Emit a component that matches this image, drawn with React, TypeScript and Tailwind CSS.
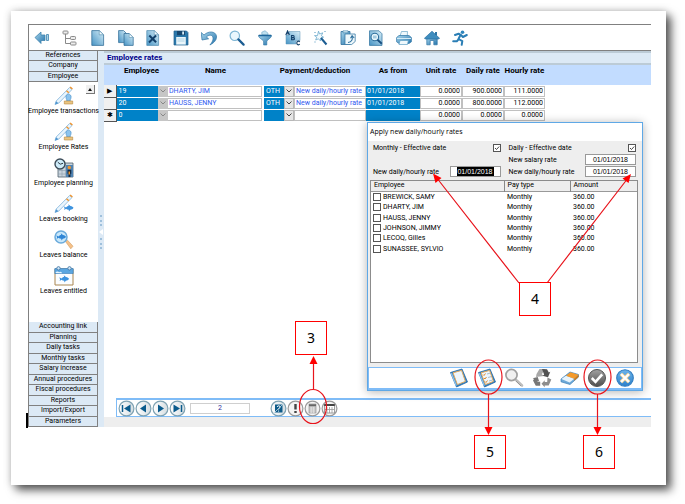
import React from "react";

const UI = "font-['Roboto','Liberation_Sans',sans-serif]";

/* ---------- toolbar icons (16 x 16) ---------- */

function Svg({ children, size = 16, className = "" }: { children: React.ReactNode; size?: number; className?: string }) {
  return (
    <svg width={size} height={size} viewBox="0 0 16 16" fill="none" aria-hidden="true" className={className}>
      {children}
    </svg>
  );
}

const page = "M1.8 .6h7.4l4.4 4.2v10.6H1.8z";

const toolbar: { label: string; icon: React.ReactNode }[] = [
  {
    label: "Back",
    icon: (
      <Svg>
        <path d="M1 7.500 7 2v3h4v5.500H7v3z" fill="url(#steel)" stroke="#3d83ad" strokeWidth=".8" />
        <path d="M12.500 4.500h2v6h-2z" fill="#a9d6ec" stroke="#3f83ad" strokeWidth=".8" />
      </Svg>
    ),
  },
  {
    label: "Tree view",
    icon: (
      <Svg>
        <g stroke="#8a8a8a" strokeWidth="1" fill="#ececec">
          <path d="M3.500 4v9.500h5M3.500 8.500h5" fill="none" />
          <rect x="1" y="1" width="5" height="3" rx=".8" />
          <rect x="8.500" y="6.500" width="5" height="3" rx=".8" />
          <rect x="8.500" y="12" width="5.500" height="3" rx=".8" />
        </g>
      </Svg>
    ),
  },
  {
    label: "New",
    icon: (
      <Svg>
        <path d={page} fill="url(#doc)" stroke="#39729b" strokeWidth=".8" />
        <path d="M9.200 .6v4.200h4.400z" fill="#f2fafd" stroke="#5b93b5" strokeWidth=".7" />
      </Svg>
    ),
  },
  {
    label: "Copy",
    icon: (
      <Svg>
        <path d="M.6 .6h5l3 3v9H.6z" fill="url(#doc)" stroke="#39729b" strokeWidth=".8" />
        <path d="M6 3.500h5.200l4 4v7.900H6z" fill="url(#doc)" stroke="#39729b" strokeWidth=".8" />
        <path d="M11.200 3.500v4h4z" fill="#f2fafd" stroke="#5b93b5" strokeWidth=".6" />
      </Svg>
    ),
  },
  {
    label: "Delete",
    icon: (
      <Svg>
        <path d={page} fill="url(#doc)" stroke="#5b93b5" strokeWidth=".8" />
        <path d="M9.200 .6v4.200h4.400z" fill="#f2fafd" stroke="#5b93b5" strokeWidth=".7" />
        <path d="m4.300 5.500 6.800 6.800M11 5.500l-7 7" stroke="#123f69" strokeWidth="2" />
      </Svg>
    ),
  },
  {
    label: "Save",
    icon: (
      <Svg>
        <path d="M1 1h12.500L15 2.500V15H1z" fill="#2b78ab" stroke="#1f5f8d" strokeWidth=".7" />
        <path d="M4 1h8v4.200H4z" fill="#17466e" />
        <path d="M9.200 1.600h1.800v2.900H9.200z" fill="#d8eef8" />
        <path d="M3.200 7h9.600v7.600H3.200z" fill="#eaf6fb" />
        <path d="M4.500 9h7M4.500 11h7" stroke="#9cc7dc" strokeWidth=".7" />
      </Svg>
    ),
  },
  {
    label: "Undo",
    icon: (
      <Svg>
        <path
          d="M.2 2.500 1 10l6.600-1.200L5.400 7C7.500 4.800 10.600 4.600 11.600 6.600c1 2.200.2 5-2.700 8.400 4.800-2.400 7.200-5.800 6.500-9.200C14.500 1.200 7.500.6 3 5z"
          fill="url(#steel)"
          stroke="#2f76a6"
          strokeWidth=".7"
        />
      </Svg>
    ),
  },
  {
    label: "Find",
    icon: (
      <Svg>
        <circle cx="5.800" cy="5.800" r="4.700" fill="#eaf7fd" stroke="#7db5d4" strokeWidth="1.200" />
        <path d="m9.400 9.400 5.200 5.200" stroke="#1c5d92" strokeWidth="2.200" strokeLinecap="round" />
      </Svg>
    ),
  },
  {
    label: "Filter",
    icon: (
      <Svg>
        <path d="M4.800 4.500V2.200L8 .7l3 2.500v1.800z" fill="#bfe0ef" stroke="#6ca6c6" strokeWidth=".6" />
        <path d="M1.800 5h12.400v2l-4.400 4v4H6.600v-4L1.800 7z" fill="url(#steel)" stroke="#2f76a6" strokeWidth=".6" />
        <path d="M1.600 5.600h12.800" stroke="#1f679c" strokeWidth="1.300" />
      </Svg>
    ),
  },
  {
    label: "Sort",
    icon: (
      <Svg>
        <path d="M1 5h3V1.500h11v9h-4V14H1z" fill="url(#doc)" stroke="#5b93b5" strokeWidth=".5" />
        <g stroke="#123f69" strokeWidth="1.100">
          <path d="M.8 5 2.600.9 4.400 5M1.400 3.700h2.400" />
          <path d="M6.600 5.500v4.200h1.800c1.400 0 1.400-2 0-2.100H6.600h1.600c1.200 0 1.200-2.100 0-2.100z" />
          <path d="M14.800 11.800c-1.200-1.200-3-.6-3 1.200s1.800 2.400 3 1.200" />
        </g>
      </Svg>
    ),
  },
  {
    label: "Wizard",
    icon: (
      <Svg>
        <path d="M5.500 1.200 6.600 4l3.200-1.200L8.400 5.700l2.200 1.500-2.800.8-.3 3-2-2.200-2.800 1.200 1-2.800L1.500 5.600h3z" fill="#f3fafd" stroke="#6ba9cc" strokeWidth=".8" />
        <path d="m8 8 5.500 6.500" stroke="#1c5d92" strokeWidth="2" />
        <path d="M1.500 2.500h1M11.500 1.500h1M1.500 12h1" stroke="#4b93bd" />
      </Svg>
    ),
  },
  {
    label: "Paste",
    icon: (
      <Svg>
        <path d="M1 1.500h9v13H1z" fill="url(#steel)" stroke="#2d6f9d" strokeWidth=".8" />
        <path d="M3 .8h5v2H3z" fill="#d4ebf5" stroke="#3c7ca6" strokeWidth=".6" />
        <path d="M5 4h10.200v7.500l-3.500 3H5z" fill="#eef8fc" stroke="#3c7ca6" strokeWidth=".8" />
        <path d="M8 12.500c3.600-.2 4.800-3 4.100-6M10.500 8.200l1.600-2.500L14.200 8" stroke="#2d6f9d" strokeWidth="1.100" />
      </Svg>
    ),
  },
  {
    label: "Preview",
    icon: (
      <Svg>
        <path d="M1.500 .8h9.500l3 3v11.600H1.500z" fill="url(#doc)" stroke="#3c7ca6" strokeWidth=".8" />
        <circle cx="6.800" cy="7" r="3.800" fill="#e8f6fc" stroke="#2d6f9d" strokeWidth="1.100" />
        <path d="M5 6.200h3.600M5 7.800h3.600" stroke="#5f9fc4" strokeWidth=".7" />
        <path d="m9.500 9.800 4.300 4" stroke="#184f80" strokeWidth="1.900" />
      </Svg>
    ),
  },
  {
    label: "Print",
    icon: (
      <Svg>
        <path d="M4 6 5.500 1.500h6L11.300 6z" fill="#eef8fc" stroke="#6ca6c6" strokeWidth=".7" />
        <path d="M.6 7.500 3 5.500h10l2.400 2v4.300L13 13.500H3L.6 11.800z" fill="url(#steel)" stroke="#2f76a6" strokeWidth=".7" />
        <path d="M1 8.500h14" stroke="#d5ecf6" strokeWidth="1" />
        <path d="m4 10.500-1 4h8.500l.8-4z" fill="#eef8fc" stroke="#5f9fc4" strokeWidth=".7" />
      </Svg>
    ),
  },
  {
    label: "Home",
    icon: (
      <Svg>
        <path d="M2.800 7.500h10.400v7.300H9.800v-4.300H6.200v4.300H2.800z" fill="url(#steel)" stroke="#2f76a6" strokeWidth=".7" />
        <path d="M11 2h2v3.500h-2z" fill="#2f76a6" />
        <path d="M.4 8.300 8 1.200l7.600 7.100-1.200.7H1.600z" fill="#3f8dbe" stroke="#1f679c" strokeWidth=".6" />
      </Svg>
    ),
  },
  {
    label: "Exit",
    icon: (
      <Svg>
        <circle cx="10.500" cy="2.300" r="1.800" fill="#2f86bd" />
        <path
          d="M3 5 6.600 3.700l2.600 1.400 1.700 1.900 3.900-2M8.300 5.300 6.500 9l3.800 2.200-.6 3.600M6.800 9l-2 2.300H1.200"
          stroke="#2a7eb5"
          strokeWidth="2"
          strokeLinecap="round"
          strokeLinejoin="round"
        />
      </Svg>
    ),
  },
];

/* ---------- side panel icons (20 x 20) ---------- */

function Side({ children }: { children: React.ReactNode }) {
  return (
    <svg width="20" height="20" viewBox="0 0 20 20" fill="none" aria-hidden="true">
      {children}
    </svg>
  );
}

const pen = (
  <>
    <path d="M1 18.500 2.200 15 15.600 1.500 18 3.500 4.800 17z" fill="#e9f5fd" stroke="#7fb2db" strokeWidth=".8" />
    <path d="m15.600 1.500 1-1 2.300 2-1 1zM12 5.200l1-1 2.300 2-1 1z" fill="#f0952f" />
    <path d="m1 18.500 3.500-1.300-2.400-2z" fill="#4d94cf" />
  </>
);
const stamp = (
  <>
    <path d="M12 11.500a2.600 2.600 0 1 1 5 0c0 1.500-1 1.500-.8 3.500h-3.400c.2-2-.8-2-.8-3.500z" fill="#8cc4ee" stroke="#4e93cc" strokeWidth=".7" />
    <path d="M10.300 15h8.400v3h-8.400z" fill="#e9c583" stroke="#b88a3e" strokeWidth=".6" />
  </>
);
const fish = "M1 3 4 4.800C5.500 2.800 6.500 2.600 7.500 2.600L7 .3l3 2.400c2 .2 3.500 1.300 4 2.400C13 7 11.500 7.600 9.800 7.700L8 10l-.4-2.300C6 7.400 5 6.900 4 6.200L1.500 8l.6-2.400z";

const sideItems: { label: string; icon: React.ReactNode }[] = [
  { label: "Employee transactions", icon: <Side>{pen}{stamp}</Side> },
  { label: "Employee Rates", icon: <Side>{pen}{stamp}</Side> },
  {
    label: "Employee planning",
    icon: (
      <Side>
        <path d="M4 5h15v14H4z" fill="#c9d4dd" stroke="#4e5f6c" strokeWidth=".8" />
        <path d="M4 9h15M4 12.500h15M4 16h15M8 5v14M11.500 5v14" stroke="#8b9cab" strokeWidth=".6" />
        <path d="M12 7h7v12h-7z" fill="#4f83b3" />
        <circle cx="15.300" cy="9.500" r="1.700" fill="#f0952f" />
        <path d="M13.500 11.800h3.800v4h-.8V19h-2v-3.200h-1z" fill="#152c44" />
        <path d="M14.500 13.500h1.500v3h-1.500z" fill="#f0952f" />
        <circle cx="6" cy="6" r="5" fill="#cdebf9" stroke="#3b4b58" strokeWidth="1.400" />
        <path d="m3.800 4.200 2.400 2L9 5.300" stroke="#2c3a45" strokeWidth="1" />
      </Side>
    ),
  },
  { label: "Leaves booking", icon: <Side>{pen}<path d={fish} transform="translate(9 10) scale(.75)" fill="#3d93df" /></Side> },
  {
    label: "Leaves balance",
    icon: (
      <Side>
        <path d="m11.500 11.500 2-1.300 5.500 6-2.200 2.600z" fill="#f6c189" stroke="#d09a5c" strokeWidth=".6" />
        <circle cx="7" cy="7" r="6" fill="#c9e8fb" stroke="#6aaadb" strokeWidth="1.500" />
        <path d={fish} transform="translate(1.500 3) scale(.75)" fill="#2f86d6" />
      </Side>
    ),
  },
  {
    label: "Leaves entitled",
    icon: (
      <Side>
        <path d="M1 3h18v16H1z" fill="#fbfdff" stroke="#a98650" strokeWidth="1" />
        <path d="M.8 2.500h18.400v5H.8z" fill="#5ba6e0" stroke="#3578b3" strokeWidth=".6" />
        <path d="M1.500 7c1-2.200 3-1.500 3.600-.7C6.500 5 8 6 8 7.300" fill="#e6f4fd" />
        <circle cx="4.500" cy="2.300" r="1.700" fill="#cfe6f7" stroke="#3a6f9e" strokeWidth=".8" />
        <circle cx="15.500" cy="2.300" r="1.700" fill="#cfe6f7" stroke="#3a6f9e" strokeWidth=".8" />
        <path d={fish} transform="translate(4.500 9) scale(.75)" fill="#3d93df" />
      </Side>
    ),
  },
];

/* ---------- dialog icons (20 x 20) ---------- */

function Big({ children }: { children: React.ReactNode }) {
  return (
    <svg width="20" height="20" viewBox="0 0 20 20" fill="none" aria-hidden="true">
      {children}
    </svg>
  );
}

const notebook = (
  <>
    <path d="m1.500 4.500 11.500-3.500 5.500 13-11 5z" fill="#2f7fc4" stroke="#2569a6" strokeWidth=".8" />
    <path d="m4 4.800 8.600-2.400 3.800 11-8 3.200z" fill="#eef6fc" stroke="#e6aa5c" strokeWidth="1" />
    <path d="m2.300 5.200 5 12.600" stroke="#8dc2ec" strokeWidth="1.300" />
  </>
);

const dialogTools: { label: string; icon: React.ReactNode }[] = [
  { label: "Deselect all", icon: <Big>{notebook}</Big> },
  {
    label: "Select all",
    icon: (
      <Big>
        {notebook}
        <path d="m6 6.500 1 1 1.500-2M7 10l1 1 1.500-2M8 13.500l1 1 1.500-2" stroke="#e08a2c" strokeWidth="1" />
        <path d="m10 6 3-.8M11 9.500l3-.8M12 13l3-.8" stroke="#9db5c8" strokeWidth=".9" />
      </Big>
    ),
  },
  {
    label: "Search",
    icon: (
      <Big>
        <path d="m11 11 7 6.500" stroke="#bdbdbd" strokeWidth="2.600" strokeLinecap="round" />
        <path d="m12 13 5 5" stroke="#8d8d8d" strokeWidth=".8" />
        <circle cx="7.500" cy="7" r="5.600" fill="#f0f0f0" stroke="#a0a0a0" strokeWidth="1.700" />
      </Big>
    ),
  },
  {
    label: "Refresh",
    icon: (
      <Big>
        <path d="M4.500 6 7.500 1h5.500L9.800 6.200 12 8 4 9z" fill="#a8a8a8" />
        <path d="m10 1 5 .2 1.800 3.200 1.500-.6-2.300 5.500-5.500-1.600 1.700-.9z" fill="#525252" />
        <path d="m15.500 9.500 3.800 2-2.600 6h-4v1.800L9.500 15.800l3.200-3.600v1.900h2.500z" fill="#8d8d8d" />
        <path d="M8.200 13.800v4H3.800L1 12.600l1-1.600-1.300-.8 5-1.200 1.500 4.500-1.400-.7-.3 1z" fill="#777" />
      </Big>
    ),
  },
  {
    label: "Clear",
    icon: (
      <Big>
        <path d="m1 11 9-7 8.500 2.500V9L10 16.500 1 13.800z" fill="#6ea9d8" stroke="#3c7fb8" strokeWidth=".7" />
        <path d="m1.500 11 4.500-3.300 8.200 3-4.600 3.700z" fill="#e8f4fc" />
        <path d="m6 7.700 4.500-3.500 8 2.500-4.300 4z" fill="#f59a2a" />
        <path d="m14.200 10.700 4.300-4V9l-4.300 3.800z" fill="#d57a12" />
      </Big>
    ),
  },
  {
    label: "Validate",
    icon: (
      <Big>
        <circle cx="10" cy="10" r="8.500" fill="url(#dark)" stroke="#555" strokeWidth="1" />
        <path d="m4.800 10 3.700 3.800 6.700-7.500" stroke="#fff" strokeWidth="2.600" />
      </Big>
    ),
  },
  {
    label: "Cancel",
    icon: (
      <Big>
        <circle cx="10" cy="10" r="8.300" fill="url(#sky)" stroke="#2f7cc0" strokeWidth="1.100" />
        <path d="m6 6 8 8M14 6l-8 8" stroke="#f0cf90" strokeWidth="3.800" />
        <path d="m6 6 8 8M14 6l-8 8" stroke="#fff" strokeWidth="2" />
      </Big>
    ),
  },
];

/* ---------- record navigator ---------- */

function Round({ label, grey = false, children }: { label: string; grey?: boolean; children: React.ReactNode }) {
  return (
    <button type="button" aria-label={label} className="block size-[17px]">
      <svg width="17" height="17" viewBox="0 0 17 17" fill="none" aria-hidden="true">
        <circle cx="8.500" cy="8.500" r="7.400" fill={grey ? "#f4f4f4" : "url(#pearl)"} stroke={grey ? "#9a9a9a" : "#7fa3b3"} strokeWidth="1.200" />
        {children}
      </svg>
    </button>
  );
}

function Gradients() {
  const stops = (a: string, b: string) => (
    <>
      <stop offset="0" stopColor={a} />
      <stop offset="1" stopColor={b} />
    </>
  );
  return (
    <svg width="0" height="0" className="absolute" aria-hidden="true">
      <defs>
        <linearGradient id="steel" x1="0" y1="0" x2="1" y2="1">{stops("#a9d6ec", "#2373ab")}</linearGradient>
        <linearGradient id="doc" x1="0" y1="1" x2="1" y2="0">{stops("#4593c4", "#d9eff8")}</linearGradient>
        <linearGradient id="dark" x1="0" y1="0" x2="0" y2="1">{stops("#a2a2a2", "#4d4d4d")}</linearGradient>
        <linearGradient id="sky" x1="0" y1="0" x2="0" y2="1">{stops("#6db4ea", "#2c80cb")}</linearGradient>
        <linearGradient id="pearl" x1="0" y1="0" x2="1" y2="0">{stops("#ffffff", "#d5dde1")}</linearGradient>
      </defs>
    </svg>
  );
}

/* ---------- parts ---------- */

const topTabs = ["References", "Company", "Employee"];
const bottomTabs = [
  "Accounting link", "Planning", "Daily tasks", "Monthly tasks", "Salary increase",
  "Annual procedures", "Fiscal procedures", "Reports", "Import/Export", "Parameters",
];

function Tabs({ items, className }: { items: string[]; className: string }) {
  return (
    <div className={`flex flex-col ${className}`}>
      {items.map((t) => (
        <button
          key={t}
          type="button"
          className="min-h-0 flex-1 overflow-hidden border-r border-b border-[#808080] bg-[#dce9f5] text-center text-[7px] leading-[9px] whitespace-nowrap text-black"
        >
          {t}
        </button>
      ))}
    </div>
  );
}

function Sidebar() {
  return (
    <nav className="relative flex w-[69px] shrink-0 flex-col">
      <Tabs items={topTabs} className="h-[31px]" />
      <button type="button" aria-label="Scroll up" className="absolute top-[34px] right-[3px] flex size-[9px] items-center justify-center border-r border-b border-[#777] bg-[#f0f0f0]">
        <svg width="4" height="3" viewBox="0 0 4 3" aria-hidden="true"><path d="M0 3 2 0l2 3z" fill="#111" /></svg>
      </button>
      <div className="flex grow flex-col gap-[6px] pt-[4px]">
        {sideItems.map((s) => (
          <button key={s.label} type="button" className="flex flex-col items-center text-[7px] leading-[10px] whitespace-nowrap text-black">
            {s.icon}
            <span>{s.label}</span>
          </button>
        ))}
      </div>
      <Tabs items={bottomTabs} className="h-[105px]" />
    </nav>
  );
}

function Splitter() {
  return (
    <div className="flex w-[6px] shrink-0 flex-col items-center justify-center gap-[3px] bg-[#dce9f5] pb-[14px]">
      <span className="h-[11px] w-0 border-l-2 border-dotted border-[#9fc0dc]" />
      <svg width="4" height="6" viewBox="0 0 4 6" aria-hidden="true"><path d="M4 0v6L0 3z" fill="#fff" /></svg>
      <span className="h-[11px] w-0 border-l-2 border-dotted border-[#9fc0dc]" />
    </div>
  );
}

function Combo({ value, label, grey = false, width }: { value: string; label: string; grey?: boolean; width: string }) {
  return (
    <span className={`relative block shrink-0 ${width}`}>
      <select aria-label={label} defaultValue={value} className="block h-[11px] w-full appearance-none bg-[#0082c8] pl-[2px] text-[7px] leading-[11px] text-white">
        <option>{value}</option>
      </select>
      <span className={`pointer-events-none absolute inset-y-0 right-0 flex w-[10px] items-center justify-center border ${grey ? "border-[#c6c6c6] bg-[#c6c6c6] text-[#888]" : "border-[#b8b8b8] bg-[#e6e6e6] text-[#444]"}`}>
        <svg width="6" height="4" viewBox="0 0 6 4" fill="none" aria-hidden="true"><path d="m.5.5 2.500 2.500L5.500.5" stroke="currentColor" /></svg>
      </span>
    </span>
  );
}

const cell = "block h-[11px] w-full min-w-0 border border-[#c0c0c0] bg-white px-px text-[7px] leading-[9px]";

const rows = [
  { mark: "▶", id: "19", name: "DHARTY, JIM", code: "OTH", pay: "New daily/hourly rate", from: "01/01/2018", rates: ["0.0000", "900.0000", "111.0000"] },
  { mark: "", id: "20", name: "HAUSS, JENNY", code: "OTH", pay: "New daily/hourly rate", from: "01/01/2018", rates: ["0.0000", "800.0000", "112.0000"] },
  { mark: "✱", id: "0", name: "", code: "", pay: "", from: "", rates: ["0.0000", "0.0000", "0.0000"] },
];
const rateNames = ["Unit rate", "Daily rate", "Hourly rate"];

function RatesGrid() {
  return (
    <div className="bg-linear-to-b from-[#c2dcff] from-[20px] to-transparent to-[20px]">
      <table className="w-[441px] table-fixed border-collapse">
        <colgroup>
          <col className="w-[12px]" />
          <col className="w-[51px]" />
          <col className="w-[97px]" />
          <col className="w-[102px]" />
          <col className="w-[54px]" />
          <col className="w-[42px]" />
          <col className="w-[42px]" />
          <col className="w-[41px]" />
        </colgroup>
        <thead>
          <tr className="h-[20px] align-top text-[8px] leading-[11px] font-bold whitespace-nowrap text-black">
            <td />
            {["Employee", "Name", "Payment/deduction", "As from", ...rateNames].map((h) => (
              <th key={h} scope="col" className="p-0 text-center">{h}</th>
            ))}
          </tr>
        </thead>
        <tbody>
          {rows.map((r) => (
            <tr key={r.id} className="h-[12px]">
              <td className="border-r border-b border-[#555] bg-[#f0f0f0] p-0 text-center text-[7px] leading-[10px] text-black">{r.mark}</td>
              <td className="p-0"><Combo value={r.id} label="Employee" grey width="w-[51px]" /></td>
              <td className="p-0 pr-[2px]"><input aria-label="Name" defaultValue={r.name} className={`${cell} text-[#3058f0]`} /></td>
              <td className="p-0">
                <div className="flex">
                  <Combo value={r.code} label="Payment code" width="w-[30px]" />
                  <input aria-label="Payment" defaultValue={r.pay} className={`${cell} text-[#3058f0]`} />
                </div>
              </td>
              <td className="p-0"><input aria-label="As from" defaultValue={r.from} className="block h-[11px] w-full bg-[#0082c8] px-px text-[7px] leading-[11px] text-white" /></td>
              {r.rates.map((v, i) => (
                <td key={i} className="p-0"><input aria-label={rateNames[i]} defaultValue={v} className={`${cell} text-right text-black`} /></td>
              ))}
            </tr>
          ))}
        </tbody>
      </table>
    </div>
  );
}

function Navigator() {
  return (
    <div className="bg-[#eeeeee] pb-[10px]">
      <div className="bg-white pl-[12px]">
        <div className="flex h-[19px] items-center border-t-2 border-b border-l border-[#7fbcf7] pl-px">
          <Round label="First record"><path d="M4.500 5v7" stroke="#0a5b8c" strokeWidth="1.500" /><path d="M12.500 4.500v8L6 8.500z" fill="#0a5b8c" /></Round>
          <Round label="Previous record"><path d="M11 4.500v8l-6-4z" fill="#0a5b8c" /></Round>
          <Round label="Next record"><path d="M6 4.500v8l6-4z" fill="#0a5b8c" /></Round>
          <Round label="Last record"><path d="M12.500 5v7" stroke="#0a5b8c" strokeWidth="1.500" /><path d="M4.500 4.500v8l6.500-4z" fill="#0a5b8c" /></Round>
          <input aria-label="Record number" defaultValue="2" className="mr-[20px] ml-[4px] h-[11px] w-[60px] border border-[#cfcfcf] bg-white text-center text-[7px] leading-[9px] text-[#3333a0]" />
          <Round label="Help">
            <path d="M5 4.500h7.500v8H5z" fill="#0f5c8a" /><path d="M7.200 7c0-1.600 3-1.600 3 0 0 1.200-1.600 1-1.600 2.400M8.600 10.600v1" stroke="#fff" /><path d="M3.500 13.500 13.500 3.500" stroke="#c3d9e4" strokeWidth=".8" />
          </Round>
          <Round label="Alerts" grey><path d="M8.500 4v5.500M8.500 11v2" stroke="#444" strokeWidth="2.400" /></Round>
          <Round label="Apply new rates" grey>
            <path d="M5 4h7v9H5z" fill="#b5b5b5" stroke="#888" strokeWidth=".6" /><path d="M5 5.200h7" stroke="#666" strokeWidth="1.600" /><path d="M5.500 8h6M5.500 10h6M5.500 12h6" stroke="#eee" strokeWidth=".7" /><path d="M7.200 7v6M9.700 7v6" stroke="#eee" strokeWidth=".7" />
          </Round>
          <Round label="Calendar" grey>
            <path d="M3.500 5h10v8h-10z" fill="#fff" stroke="#888" strokeWidth=".8" /><path d="M3.200 5h10.600" stroke="#444" strokeWidth="2" /><path d="M6 7v6M8.500 7v6M11 7v6M3.500 9.500h10" stroke="#999" strokeWidth=".8" />
          </Round>
        </div>
      </div>
    </div>
  );
}

const people = ["BREWICK, SAMY", "DHARTY, JIM", "HAUSS, JENNY", "JOHNSON, JIMMY", "LECOQ, Gilles", "SUNASSEE, SYLVIO"];

const dateBox = "flex h-[11px] w-[51px] items-center justify-center border border-[#999] bg-white";
const tick = "block size-[8px] appearance-none border border-[#555] bg-white";

function Tick({ id, label }: { id: string; label: string }) {
  return (
    <div className="flex items-center justify-between">
      <label htmlFor={id}>{label}</label>
      <span className="relative block">
        <input id={id} type="checkbox" defaultChecked className={tick} />
        <svg width="8" height="8" viewBox="0 0 8 8" fill="none" className="pointer-events-none absolute inset-0" aria-hidden="true"><path d="m2 4 1.500 1.500L6.200 2.500" stroke="#333" strokeWidth=".9" /></svg>
      </span>
    </div>
  );
}

function DateRow({ id, label, selected = false }: { id: string; label: string; selected?: boolean }) {
  return (
    <div className="flex items-center justify-between">
      <label htmlFor={id}>{label}</label>
      <span className={dateBox}>
        <input
          id={id}
          defaultValue="01/01/2018"
          className={`h-[9px] w-[37px] text-center font-['Liberation_Sans',sans-serif] text-[7px] leading-[9px] ${selected ? "bg-black text-white" : "text-black"}`}
        />
      </span>
    </div>
  );
}

function ApplyRates() {
  return (
    <section
      role="dialog"
      aria-label="Apply new daily/hourly rates"
      className="absolute top-[111px] left-[356px] w-[276px] border border-[#5fa8e6] bg-[#eeeeee] text-[7px] leading-[10px] text-black shadow-[0_1px_9px_rgba(0,0,0,0.3)]"
    >
      <h2 className="h-[18px] bg-white pl-[2px] font-['Open_Sans',sans-serif] text-[7px] leading-[17px] text-black">Apply new daily/hourly rates</h2>
      <div className="grid grid-cols-2 gap-[8px] pt-[2px] pr-[6px] pb-[3px] pl-[5px]">
        <div className="flex flex-col justify-between">
          <Tick id="monthly" label="Monthly - Effective date" />
          <DateRow id="monthly-rate" label="New daily/hourly rate" selected />
        </div>
        <div className="flex flex-col gap-px">
          <Tick id="daily" label="Daily - Effective date" />
          <DateRow id="daily-salary" label="New salary rate" />
          <DateRow id="daily-rate" label="New daily/hourly rate" />
        </div>
      </div>
      <div className="mr-[4px] ml-[2px] h-[183px] border border-[#8c8c8c] bg-white">
        <table className="h-[73px] w-full table-fixed border-collapse">
          <thead>
            <tr className="h-[10px] border-b border-[#999] bg-[#eeeeee] text-left">
              <th scope="col" className="w-[133px] border-r border-[#888] p-0 pl-[3px] leading-[9px] font-normal">Employee</th>
              <th scope="col" className="w-[66px] border-r border-[#888] p-0 pl-[3px] leading-[9px] font-normal">Pay type</th>
              <th scope="col" className="p-0 pl-[3px] leading-[9px] font-normal">Amount</th>
            </tr>
          </thead>
          <tbody>
            {people.map((p) => (
              <tr key={p}>
                <td className="p-0 pl-[2px]">
                  <label className="flex items-center gap-[2px]">
                    <input type="checkbox" className={tick} />
                    {p}
                  </label>
                </td>
                <td className="p-0 pl-[3px]">Monthly</td>
                <td className="p-0 pl-[3px]">360.00</td>
              </tr>
            ))}
          </tbody>
        </table>
      </div>
      <div className="mt-[4px] flex h-[23px] items-center justify-end border border-b-2 border-[#7fbcf7] bg-white pr-[6px]">
        <div className="flex w-[186px] justify-between">
          {dialogTools.map((t) => (
            <button key={t.label} type="button" aria-label={t.label}>{t.icon}</button>
          ))}
        </div>
      </div>
    </section>
  );
}

/* ---------- callouts over the window ---------- */

function Callout({ n, place }: { n: number; place: string }) {
  return (
    <span className={`absolute flex h-[34px] w-[32px] items-center justify-center border border-[#f00] bg-white font-['Noto_Sans',sans-serif] text-[14px] leading-[20px] text-black ${place}`}>
      {n}
    </span>
  );
}

function Callouts() {
  return (
    <div className="pointer-events-none absolute inset-0">
      <svg width="655" height="474" viewBox="11 11 655 474" fill="none" className="absolute top-0 left-0" aria-hidden="true">
        <g stroke="#e8141c" strokeWidth="1.200">
          <ellipse cx="313" cy="406.500" rx="13.500" ry="17" />
          <ellipse cx="488.500" cy="377" rx="13.500" ry="17" />
          <ellipse cx="597.500" cy="377" rx="13.500" ry="17" />
          <path d="M313.500 389v-28M488.500 394v35M597.500 394v35M519 283 438 179.500M547 283l79.500-103" />
        </g>
        <path d="m313.500 356 4 8h-8zM488.500 435l4-8h-8zM597.500 435l4-8h-8zM433 173.500l8.500 4.500-6 5zM631 174l-2.500 9-6-4.500z" fill="#f00" />
      </svg>
      <Callout n={3} place="top-[310px] left-[284px]" />
      <Callout n={4} place="top-[271px] left-[508px]" />
      <Callout n={5} place="top-[424px] left-[463px]" />
      <Callout n={6} place="top-[424px] left-[572px]" />
    </div>
  );
}

export default function App() {
  return (
    <main className={`bg-white pt-[11px] pr-[19px] pb-[19px] pl-[11px] ${UI}`}>
      <Gradients />
      <div className="relative bg-white pt-[13px] pr-[15px] pb-[58px] pl-[17px] shadow-[5px_5px_9px_rgba(0,0,0,0.65),0_0_8px_rgba(0,0,0,0.2)]">
        <div className="border-t border-l border-[#808080]">
          <header className="flex h-[26px] items-center border-b border-[#808080] pl-[3px]">
            <div role="toolbar" className="flex w-[438px] justify-between">
              {toolbar.map((t) => (
                <button key={t.label} type="button" aria-label={t.label} className="flex w-[20px] justify-center">{t.icon}</button>
              ))}
            </div>
          </header>
          <div className="flex h-[376px]">
            <Sidebar />
            <Splitter />
            <div className="flex min-w-0 grow flex-col bg-white">
              <h1 className="border-t-2 border-b-2 border-[#bccbd6] bg-[#dce9f5] pl-[3px] text-[8px] leading-[10px] font-bold text-[#00008b]">Employee rates</h1>
              <RatesGrid />
              <div className="grow" />
              <Navigator />
            </div>
          </div>
        </div>
        <span className="absolute top-[402px] left-[15px] h-[15px] w-[2px] bg-black" />
        <ApplyRates />
        <Callouts />
      </div>
    </main>
  );
}
